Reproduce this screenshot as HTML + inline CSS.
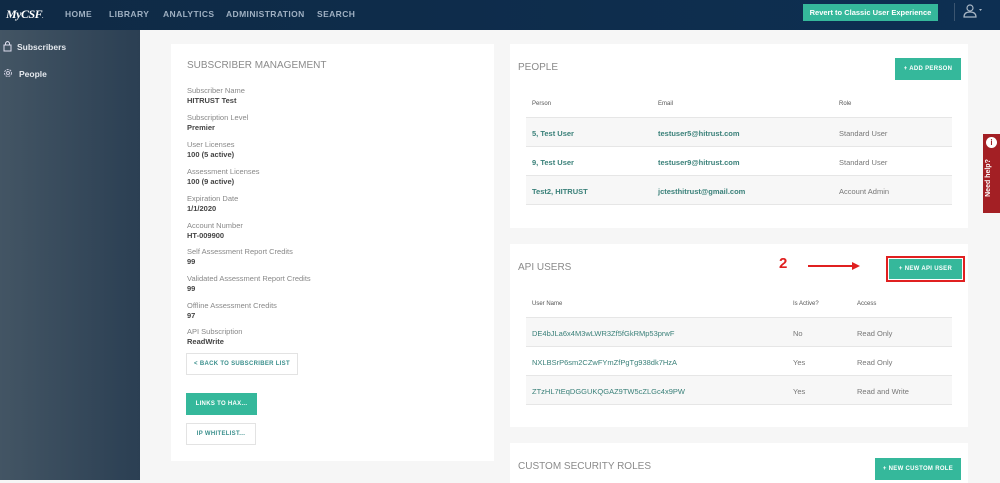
<!DOCTYPE html>
<html><head><meta charset="utf-8"><style>
*{box-sizing:border-box;margin:0;padding:0}
body{width:1000px;height:480px;overflow:hidden;background:#f6f6f6;font-family:"Liberation Sans",sans-serif;position:relative}
.nav{position:absolute;left:0;top:0;width:1000px;height:30px;background:linear-gradient(90deg,#0f2a45,#0d2f52)}
.logo{position:absolute;left:6px;top:7px;color:#fff;font-family:"Liberation Serif",serif;font-style:italic;font-size:12px;font-weight:bold;letter-spacing:-.5px}
.nl{position:absolute;top:9px;color:#9fb0c2;font-size:8.5px;font-weight:bold;letter-spacing:.4px}
.revert{position:absolute;left:803px;top:4px;width:135px;height:17px;background:#35b89b;color:#fff;font-size:7.5px;font-weight:bold;text-align:center;line-height:17px}
.side{position:absolute;left:0;top:30px;width:140px;height:450px;background:linear-gradient(90deg,#435564,#2b3f53)}
.si{position:absolute;left:17px;color:#e5e9ee;font-size:8.5px;font-weight:bold}
.card{position:absolute;background:#fff}
.h{position:absolute;color:#8a8a8a;font-size:10px;letter-spacing:0}
.lbl{position:absolute;left:16px;color:#888;font-size:7.5px}
.val{position:absolute;left:16px;color:#444;font-size:7.5px;font-weight:bold}
.btn{position:absolute;background:#35b89b;color:#fff;font-size:6px;font-weight:bold;text-align:center;letter-spacing:.3px}
.obtn{position:absolute;background:#fff;border:1px solid #e3e3e3;color:#3a8f8c;font-size:6px;font-weight:bold;text-align:center;letter-spacing:.3px}
.row{position:absolute;left:16px;width:426px;height:29px;border-bottom:1px solid #e6e6e6;font-size:7.5px}
.row span{position:absolute;top:11px}
.g{background:#f7f7f7}
.th{color:#555;font-size:6px}
.lnk{color:#3a8079;font-weight:bold}
.gr{color:#777}
</style></head><body>
<div class="nav">
<div class="logo">MyCSF<span style="font-size:5px">.</span></div>
<div class="nl" style="left:65px">HOME</div>
<div class="nl" style="left:109px">LIBRARY</div>
<div class="nl" style="left:163px">ANALYTICS</div>
<div class="nl" style="left:226px">ADMINISTRATION</div>
<div class="nl" style="left:317px">SEARCH</div>
<div class="revert">Revert to Classic User Experience</div>
<div style="position:absolute;left:954px;top:3px;width:1px;height:18px;background:#3b5570"></div>
<svg style="position:absolute;left:963px;top:4px" width="20" height="14" viewBox="0 0 20 14"><circle cx="7" cy="4" r="3" fill="none" stroke="#a9b7c5" stroke-width="1.2"/><path d="M1 13 Q1 8 7 8 Q13 8 13 13 Z" fill="none" stroke="#a9b7c5" stroke-width="1.2"/><path d="M16 5 L19 5 L17.5 7Z" fill="#a9b7c5"/></svg>
</div>
<div class="side">
<svg style="position:absolute;left:3px;top:10px" width="9" height="12" viewBox="0 0 9 12"><rect x="1" y="5" width="7" height="6" fill="none" stroke="#dde" stroke-width="1"/><path d="M2.5 5 V3 Q4.5 0 6.5 3 V5" fill="none" stroke="#dde" stroke-width="1"/></svg>
<div class="si" style="top:12px">Subscribers</div>
<svg style="position:absolute;left:3px;top:38px" width="10" height="10" viewBox="0 0 10 10"><circle cx="5" cy="5" r="3.5" fill="none" stroke="#ccd" stroke-width="1" stroke-dasharray="2 1"/><circle cx="5" cy="5" r="1.5" fill="none" stroke="#ccd" stroke-width="1"/></svg>
<div class="si" style="top:39px;left:19px">People</div>
</div>

<div class="card" style="left:171px;top:44px;width:323px;height:417px">
<div class="h" style="left:16px;top:16px">SUBSCRIBER MANAGEMENT</div>
<div class="lbl" style="top:42px">Subscriber Name</div><div class="val" style="top:52px">HITRUST Test</div>
<div class="lbl" style="top:69px">Subscription Level</div><div class="val" style="top:79px">Premier</div>
<div class="lbl" style="top:96px">User Licenses</div><div class="val" style="top:106px">100 (5 active)</div>
<div class="lbl" style="top:123px">Assessment Licenses</div><div class="val" style="top:133px">100 (9 active)</div>
<div class="lbl" style="top:150px">Expiration Date</div><div class="val" style="top:160px">1/1/2020</div>
<div class="lbl" style="top:177px">Account Number</div><div class="val" style="top:187px">HT-009900</div>
<div class="lbl" style="top:203px">Self Assessment Report Credits</div><div class="val" style="top:213px">99</div>
<div class="lbl" style="top:230px">Validated Assessment Report Credits</div><div class="val" style="top:240px">99</div>
<div class="lbl" style="top:257px">Offline Assessment Credits</div><div class="val" style="top:267px">97</div>
<div class="lbl" style="top:283px">API Subscription</div><div class="val" style="top:293px">ReadWrite</div>
<div class="obtn" style="left:15px;top:309px;width:112px;height:22px;line-height:20px">&lt; BACK TO SUBSCRIBER LIST</div>
<div class="btn" style="left:15px;top:349px;width:71px;height:22px;line-height:22px">LINKS TO HAX...</div>
<div class="obtn" style="left:15px;top:379px;width:70px;height:22px;line-height:20px">IP WHITELIST...</div>
</div>

<div class="card" style="left:510px;top:44px;width:458px;height:184px">
<div class="h" style="left:8px;top:18px">PEOPLE</div>
<div class="btn" style="left:385px;top:14px;width:66px;height:22px;line-height:22px">+ ADD PERSON</div>
<div class="row" style="top:45px"><span class="th" style="left:6px;top:12px">Person</span><span class="th" style="left:132px;top:12px">Email</span><span class="th" style="left:313px;top:12px">Role</span></div>
<div class="row g" style="top:74px"><span class="lnk" style="left:6px">5, Test User</span><span class="lnk" style="left:132px">testuser5@hitrust.com</span><span class="gr" style="left:313px">Standard User</span></div>
<div class="row" style="top:103px"><span class="lnk" style="left:6px">9, Test User</span><span class="lnk" style="left:132px">testuser9@hitrust.com</span><span class="gr" style="left:313px">Standard User</span></div>
<div class="row g" style="top:132px"><span class="lnk" style="left:6px">Test2, HITRUST</span><span class="lnk" style="left:132px">jctesthitrust@gmail.com</span><span class="gr" style="left:313px">Account Admin</span></div>
</div>

<div class="card" style="left:510px;top:244px;width:458px;height:183px">
<div class="h" style="left:8px;top:18px">API USERS</div>
<div style="position:absolute;left:269px;top:11px;color:#e02020;font-size:15px;font-weight:bold">2</div>
<div style="position:absolute;left:298px;top:21px;width:48px;height:1.5px;background:#e02020"></div>
<svg style="position:absolute;left:342px;top:18px" width="8" height="8"><path d="M0 0 L8 4 L0 8Z" fill="#e02020"/></svg>
<div style="position:absolute;left:376px;top:12px;width:79px;height:26px;border:2px solid #e02020;background:#fff"></div>
<div class="btn" style="left:379px;top:15px;width:73px;height:20px;line-height:20px">+ NEW API USER</div>
<div class="row" style="top:45px"><span class="th" style="left:6px;top:12px">User Name</span><span class="th" style="left:267px;top:12px">Is Active?</span><span class="th" style="left:331px;top:12px">Access</span></div>
<div class="row g" style="top:74px"><span class="lnk" style="left:6px;font-weight:normal">DE4bJLa6x4M3wLWR3Zf5fGkRMp53prwF</span><span class="gr" style="left:267px">No</span><span class="gr" style="left:331px">Read Only</span></div>
<div class="row" style="top:103px"><span class="lnk" style="left:6px;font-weight:normal">NXLBSrP6sm2CZwFYmZfPgTg938dk7HzA</span><span class="gr" style="left:267px">Yes</span><span class="gr" style="left:331px">Read Only</span></div>
<div class="row g" style="top:132px"><span class="lnk" style="left:6px;font-weight:normal">ZTzHL7tEqDGGUKQGAZ9TW5cZLGc4x9PW</span><span class="gr" style="left:267px">Yes</span><span class="gr" style="left:331px">Read and Write</span></div>
</div>

<div class="card" style="left:510px;top:443px;width:458px;height:40px">
<div class="h" style="left:8px;top:18px">CUSTOM SECURITY ROLES</div>
<div class="btn" style="left:365px;top:15px;width:86px;height:22px;line-height:22px">+ NEW CUSTOM ROLE</div>
</div>

<div style="position:absolute;left:983px;top:134px;width:17px;height:79px;background:#a31f24"></div>
<div style="position:absolute;left:986px;top:137px;width:11px;height:11px;border-radius:50%;background:#fff;color:#a31f24;font-size:8px;font-weight:bold;text-align:center;line-height:11px">i</div>
<div style="position:absolute;left:958px;top:172px;width:62px;height:12px;transform:rotate(-90deg);color:#fff;font-size:7px;font-weight:bold;text-align:center;line-height:12px">Need help?</div>
</body></html>
